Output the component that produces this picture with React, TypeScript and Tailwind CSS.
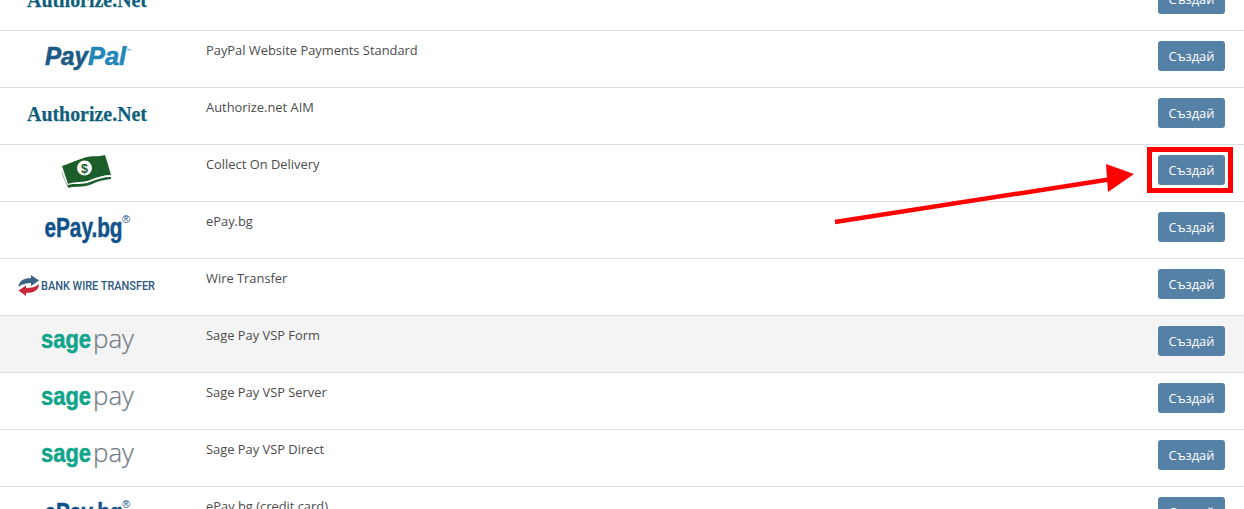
import React from 'react';

function PayPalLogo() {
  return (
    <svg width="88" height="26" viewBox="0 0 88 26">
      <text x="1" y="19" fontFamily="Liberation Sans, sans-serif" fontSize="25" fontWeight="700" fontStyle="italic" textLength="43" lengthAdjust="spacingAndGlyphs" fill="#1d5a85" stroke="#1d5a85" strokeWidth="0.6">Pay</text>
      <text x="44" y="19" fontFamily="Liberation Sans, sans-serif" fontSize="25" fontWeight="700" fontStyle="italic" textLength="38" lengthAdjust="spacingAndGlyphs" fill="#2287b8" stroke="#2287b8" strokeWidth="0.6">Pal</text>
      <text x="82" y="6" fontFamily="Liberation Sans, sans-serif" fontSize="5" fill="#2287b8">™</text>
    </svg>
  );
}

function AuthorizeLogo() {
  return (
    <svg width="124" height="22" viewBox="0 0 124 22">
      <text x="1" y="16" fontFamily="Liberation Serif, serif" fontSize="22" fontWeight="700" textLength="120" lengthAdjust="spacingAndGlyphs" fill="#0f5f7c" stroke="#0f5f7c" strokeWidth="0.25">Authorize.Net</text>
    </svg>
  );
}

function CashLogo() {
  return (
    <svg width="52" height="36" viewBox="1 0 52 36">
      <path d="M1 11 C10 8 16 5 24 2.5 C31 0.5 37 2 44 0 C46 6 48 13 50 20 C43 20 36 22 29 25 C22 28 15 26 7 29 Z" fill="#1c5e2a" />
      <path d="M0 13 C2 20 4 26 6.5 30 C14 28 21 30 29 27 C36 24 43 22 50 22 L50 24 C43 25 37 26 30 29.5 C21 33 14 30.5 7.5 33 C4 27 1 20 0 13 Z" fill="#1c5e2a" />
      <circle cx="23.5" cy="13" r="7.5" fill="#ffffff" />
      <text x="23.5" y="17.5" textAnchor="middle" fontFamily="Liberation Sans, sans-serif" fontSize="12.5" fontWeight="700" fill="#1c5e2a">$</text>
    </svg>
  );
}

function EpayLogo() {
  return (
    <svg width="88" height="30" viewBox="0 0 88 30">
      <text x="0.5" y="22" fontFamily="Liberation Sans, sans-serif" fontSize="27" fontWeight="700" textLength="78" lengthAdjust="spacingAndGlyphs" fill="#0f5189" stroke="#0f5189" strokeWidth="0.5">ePay.bg</text>
      <text x="78" y="8" fontFamily="Liberation Sans, sans-serif" fontSize="11" fill="#0f5189">®</text>
    </svg>
  );
}

function WireLogo() {
  return (
    <svg width="140" height="24" viewBox="0 0 140 24">
      <path d="M0.5 12 C0.5 6 6 3 13 3 L13 0 L21 5.5 L13 11 L13 8 C8 8 4 9 0.5 12 Z" fill="#3a6488" />
      <path d="M21 9 C21 15 16 18 8 18 L8 21 L0.5 15.5 L8 10.5 L8 13 C13 13 18 12 21 9 Z" fill="#c8283c" />
      <text x="23" y="15" fontFamily="Roboto, sans-serif" fontSize="12" fontWeight="500" textLength="114" lengthAdjust="spacingAndGlyphs" fill="#2f5a80">BANK WIRE TRANSFER</text>
    </svg>
  );
}

function SageLogo() {
  return (
    <svg width="94" height="28" viewBox="0 0 94 28">
      <text x="0" y="18" fontFamily="Liberation Sans, sans-serif" fontSize="25" fontWeight="700" textLength="50" lengthAdjust="spacingAndGlyphs" fill="#10a58a" stroke="#10a58a" strokeWidth="0.5">sage</text>
      <text x="52" y="18" fontFamily="Open Sans, sans-serif" fontSize="26" fontWeight="300" textLength="41" lengthAdjust="spacingAndGlyphs" fill="#717c86" stroke="#717c86" strokeWidth="0.25">pay</text>
    </svg>
  );
}

const rows = [
  { logo: <AuthorizeLogo />, name: '' },
  { logo: <PayPalLogo />, name: 'PayPal Website Payments Standard' },
  { logo: <AuthorizeLogo />, name: 'Authorize.net AIM' },
  { logo: <CashLogo />, name: 'Collect On Delivery' },
  { logo: <EpayLogo />, name: 'ePay.bg' },
  { logo: <WireLogo />, name: 'Wire Transfer' },
  { logo: <SageLogo />, name: 'Sage Pay VSP Form', hover: true },
  { logo: <SageLogo />, name: 'Sage Pay VSP Server' },
  { logo: <SageLogo />, name: 'Sage Pay VSP Direct' },
  { logo: <EpayLogo />, name: 'ePay.bg (credit card)' },
];

export default function App() {
  return (
    <div className="relative h-[509px] w-[1244px] overflow-hidden bg-white font-['Open_Sans',sans-serif] text-[12.88px] text-[#4c4c4c]">
      <div className="-mt-[27px]">
        {rows.map((row, i) => (
          <div
            key={i}
            className={`flex h-[57px] items-start border-t border-[#dddddd] ${row.hover ? 'bg-[#f4f4f4]' : 'bg-white'}`}
          >
            <div className="flex h-full w-[175px] shrink-0 items-center justify-center">{row.logo}</div>
            <div className="flex-1 pl-[31px] pt-[10px] leading-[18px]">{row.name}</div>
            <button className="mr-[19px] mt-[10px] h-[30px] w-[67px] rounded-[3px] bg-[#5681a6] pt-px text-[12.88px] text-white">Създай</button>
          </div>
        ))}
      </div>

      {/* annotation over the screenshot */}
      <div className="absolute left-[1147px] top-[147px] h-[46px] w-[86px] border-[5px] border-[#ff0000]" />
      <svg className="absolute left-[830px] top-[160px]" width="310" height="70" viewBox="0 0 310 70">
        <path d="M5 62 L282 19" stroke="#ff0000" strokeWidth="4.5" fill="none" />
        <path d="M276 4 L304 14 L278 32 Z" fill="#ff0000" />
      </svg>
    </div>
  );
}
